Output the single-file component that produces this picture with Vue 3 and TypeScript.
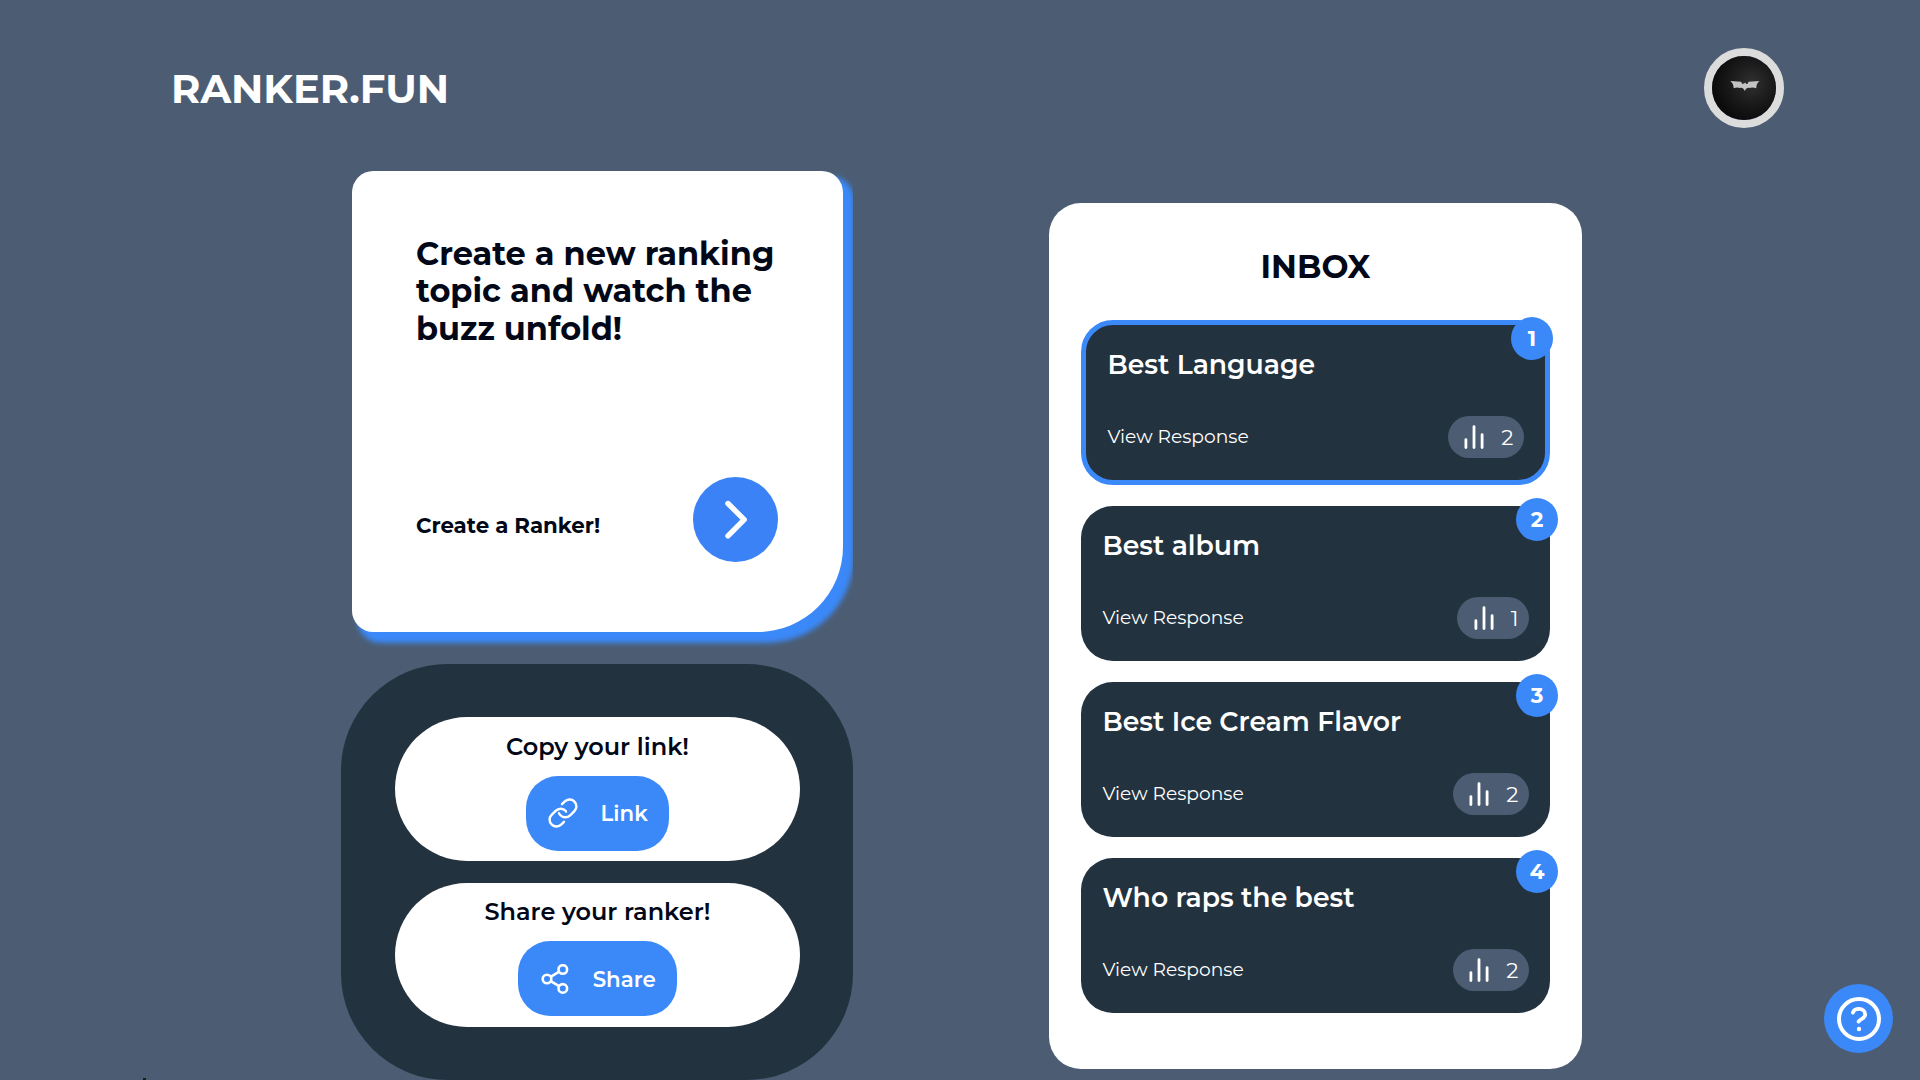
<script setup lang="ts">
interface Topic {
  title: string
  responses: number
  active?: boolean
}

const headline: string[] = ['Create a new ranking', 'topic and watch the', 'buzz unfold!']

const topics: Topic[] = [
  { title: 'Best Language', responses: 2, active: true },
  { title: 'Best album', responses: 1 },
  { title: 'Best Ice Cream Flavor', responses: 2 },
  { title: 'Who raps the best', responses: 2 },
]
</script>

<template>
  <div class="page">
    <header class="header">
      <h1 class="brand">RANKER.FUN</h1>
      <div class="avatar">
        <svg viewBox="0 0 64 64" width="64" height="64">
          <defs>
            <radialGradient id="night" cx="0.62" cy="0.42" r="0.6">
              <stop offset="0" stop-color="#303030" />
              <stop offset="0.5" stop-color="#1c1c1c" />
              <stop offset="1" stop-color="#0b0b0b" />
            </radialGradient>
          </defs>
          <circle cx="32" cy="32" r="32" fill="url(#night)" />
          <path
            d="M18.3 25 L29 25.7 L30.4 28 L31.5 27.9 L31.9 26.3 L32.4 27.2 L33.1 27.2 L33.6 26.3 L34 27.9 L35.3 28 L36.7 25.7 L47.4 25 C45.3 26.8 44.3 29 44.2 32.3 C41.8 31.2 39.3 31.2 37.6 32 C35.5 31.4 34 32.6 32.8 35 C31.6 32.6 30 31.4 28 32 C26.2 31.2 24 31.2 21.7 32.3 C21.6 29 20.5 26.8 18.3 25 Z"
            fill="#c4c4c4"
          />
        </svg>
      </div>
    </header>

    <main class="main">
      <section class="left">
        <article class="create">
          <h2 class="headline">
            <span v-for="(line, i) in headline" :key="i">{{ line }}</span>
          </h2>
          <div class="create-row">
            <span class="create-label">Create a Ranker!</span>
            <button class="go" aria-label="Create">
              <svg viewBox="0 0 85 85" width="85" height="85" fill="none" stroke="#fff" stroke-width="5.4" stroke-linecap="round" stroke-linejoin="round">
                <path d="M35 26.5 L51.2 42.7 L35 58.9" />
              </svg>
            </button>
          </div>
        </article>

        <div class="share-panel">
          <div class="pill">
            <p class="pill-title">Copy your link!</p>
            <button class="action action-link">
              <svg viewBox="0 0 30 30" width="30" height="30" fill="none" stroke="#fff" stroke-width="2.4" stroke-linecap="round" stroke-linejoin="round">
                <path d="M14 6.2 L16.6 3.6 C19.2 0.9 23.6 0.7 26.2 3.3 C29.1 6.1 29.1 10.4 26.4 13.1 L22.4 17.1 C19.4 20.1 14.8 20 12.2 17 Q11.3 16 11 15.2" />
                <path d="M16 23.8 L13.4 26.4 C10.8 29.1 6.4 29.3 3.8 26.7 C0.9 23.9 0.9 19.6 3.6 16.9 L7.6 12.9 C10.6 9.9 15.2 10 17.8 13 L18 13.6" />
              </svg>
              <span>Link</span>
            </button>
          </div>
          <div class="pill">
            <p class="pill-title share">Share your ranker!</p>
            <button class="action action-share">
              <svg viewBox="0 0 28 30" width="28" height="30" fill="none" stroke="#fff" stroke-width="2.6">
                <circle cx="6" cy="15" r="4.3" />
                <circle cx="21.8" cy="5.5" r="4.3" />
                <circle cx="21.8" cy="24.4" r="4.3" />
                <path d="M9.7 12.8 L18.1 7.7 M9.7 17.2 L18.1 22.2" />
              </svg>
              <span>Share</span>
            </button>
          </div>
        </div>
      </section>

      <section class="inbox">
        <h2 class="inbox-title">INBOX</h2>
        <div class="cards">
          <article v-for="(topic, i) in topics" :key="topic.title" class="card" :class="{ active: topic.active }">
            <span class="badge">{{ i + 1 }}</span>
            <h3 class="card-title">{{ topic.title }}</h3>
            <div class="card-row">
              <span class="view">View Response</span>
              <span class="chip">
                <svg viewBox="0 0 34 34" width="34" height="34" fill="none" stroke="#fff" stroke-width="2.8" stroke-linecap="round">
                  <path d="M8.9 19.6 V27.5 M17 6.6 V27.5 M25.1 14.6 V27.5" />
                </svg>
                <span>{{ topic.responses }}</span>
              </span>
            </div>
          </article>
        </div>
      </section>
    </main>

    <button class="help" aria-label="Help">
      <svg viewBox="0 0 44 44" width="44" height="44" fill="none" stroke="#fff" stroke-linecap="round" stroke-linejoin="round">
        <circle cx="22" cy="22" r="20" stroke-width="4" />
        <path d="M15.9 15.6 C16.7 13.2 19 11.9 22 11.9 C25.3 11.9 28.2 14.2 28.2 17.4 C28.2 21.4 22.9 22.2 21.6 24.6" stroke-width="3.8" />
        <circle cx="22" cy="32" r="2.2" fill="#fff" stroke="none" />
      </svg>
    </button>
    <i class="speck"></i>
  </div>
</template>

<style>
html,
body {
  margin: 0;
  height: 100%;
  overflow: hidden;
  background: #4c5d73;
}
</style>

<style scoped>
.page {
  position: relative;
  width: 1920px;
  height: 1080px;
  overflow: hidden;
  background: #4c5d73;
  color: #020817;
  font-family: Montserrat, Inter, "Open Sans", sans-serif;
}
h1, h2, h3, p { margin: 0; }
button {
  padding: 0;
  border: 0;
  font-family: inherit;
  color: #fff;
}
svg { display: block; flex: none; }
.header {
  display: flex;
  justify-content: space-between;
  align-items: center;
  height: 80px;
  padding: 48px 136px 0 171px;
}
.brand {
  padding-top: 1px;
  font-size: 40px;
  line-height: 54px;
  font-weight: 700;
  color: #fff;
}
.avatar {
  border: 8px solid #dcdcdc;
  border-radius: 50%;
}
.main {
  display: flex;
  height: 952px;
}
.left {
  width: 512px;
  margin-left: 341px;
  padding-top: 43px;
  overflow: hidden;
}
.create {
  display: flex;
  flex-direction: column;
  justify-content: space-between;
  box-sizing: border-box;
  width: 491px;
  height: 461px;
  margin-left: 11px;
  padding: 64px 65px 70px 64px;
  border-radius: 21.33px 21.33px 85.33px 21.33px;
  background: #fff;
  box-shadow: 8px 8px 5.33px 2.67px #3b89f8;
}
.headline {
  font-size: 32px;
  line-height: 37.33px;
  font-weight: 700;
}
.headline span {
  display: block;
  white-space: nowrap;
}
.create-row {
  display: flex;
  justify-content: space-between;
  align-items: center;
}
.create-label {
  padding-top: 11px;
  font-size: 21.33px;
  line-height: 26px;
  font-weight: 700;
}
.go {
  width: 85px;
  height: 85px;
  border-radius: 50%;
  background: #3b82f6;
}
.share-panel {
  display: flex;
  flex-direction: column;
  gap: 22px;
  box-sizing: border-box;
  height: 416px;
  margin-top: 32px;
  padding: 53px 53px 53px 54px;
  border-radius: 106.67px;
  background: #23323f;
}
.pill {
  display: flex;
  flex-direction: column;
  align-items: center;
  height: 144px;
  border-radius: 72px;
  background: #fff;
}
.pill-title {
  height: 59px;
  font-size: 24px;
  line-height: 59px;
  font-weight: 600;
}
.pill-title.share { height: 58px; line-height: 57px; }
.action {
  display: flex;
  align-items: center;
  box-sizing: border-box;
  height: 75px;
  border-radius: 32px;
  background: #3b89f8;
  font-size: 21.33px;
  line-height: 30px;
  font-weight: 600;
}
.action-link { width: 143px; padding: 0 0 2px 22px; gap: 22.6px; }
.action-share { width: 159px; padding-left: 23px; gap: 23.7px; }
.inbox {
  box-sizing: border-box;
  width: 533px;
  height: 866px;
  margin: 75px 0 0 196px;
  padding: 32px;
  border-radius: 32px;
  background: #fff;
}
.inbox-title {
  height: 85px;
  font-size: 32px;
  line-height: 63px;
  font-weight: 700;
  text-align: center;
}
.cards {
  display: flex;
  flex-direction: column;
  gap: 21px;
}
.card {
  position: relative;
  display: flex;
  flex-direction: column;
  justify-content: space-between;
  height: 112px;
  padding: 21px 21px 22px 21.4px;
  border-radius: 32px;
  background: #23323f;
  color: #fff;
}
.card.active { border: 5px solid #3b89f8; }
.badge {
  position: absolute;
  top: -8px;
  right: -8px;
  width: 42px;
  height: 43px;
  border-radius: 50%;
  background: #3b89f8;
  font-size: 21.33px;
  line-height: 43px;
  font-weight: 700;
  text-align: center;
}
.card-title {
  font-size: 26.67px;
  line-height: 37px;
  font-weight: 600;
  white-space: nowrap;
}
.card-row {
  display: flex;
  justify-content: space-between;
  align-items: center;
}
.view {
  font-size: 18.67px;
  line-height: 24px;
  font-weight: 400;
}
.chip {
  display: flex;
  align-items: center;
  box-sizing: border-box;
  height: 42px;
  gap: 9.9px;
  padding: 0 10.67px 0 9.5px;
  border-radius: 21px;
  background: #4c5d73;
  font-size: 21.33px;
  font-weight: 400;
}
.help {
  position: absolute;
  left: 1824px;
  top: 984px;
  display: flex;
  align-items: center;
  justify-content: center;
  box-sizing: border-box;
  width: 69px;
  height: 69px;
  padding-left: 1px;
  padding-top: 1px;
  border-radius: 50%;
  background: #3b89f8;
}
.speck {
  position: absolute;
  left: 143px;
  bottom: 0;
  width: 3px;
  height: 2px;
  background: #1c1c1c;
}
</style>
